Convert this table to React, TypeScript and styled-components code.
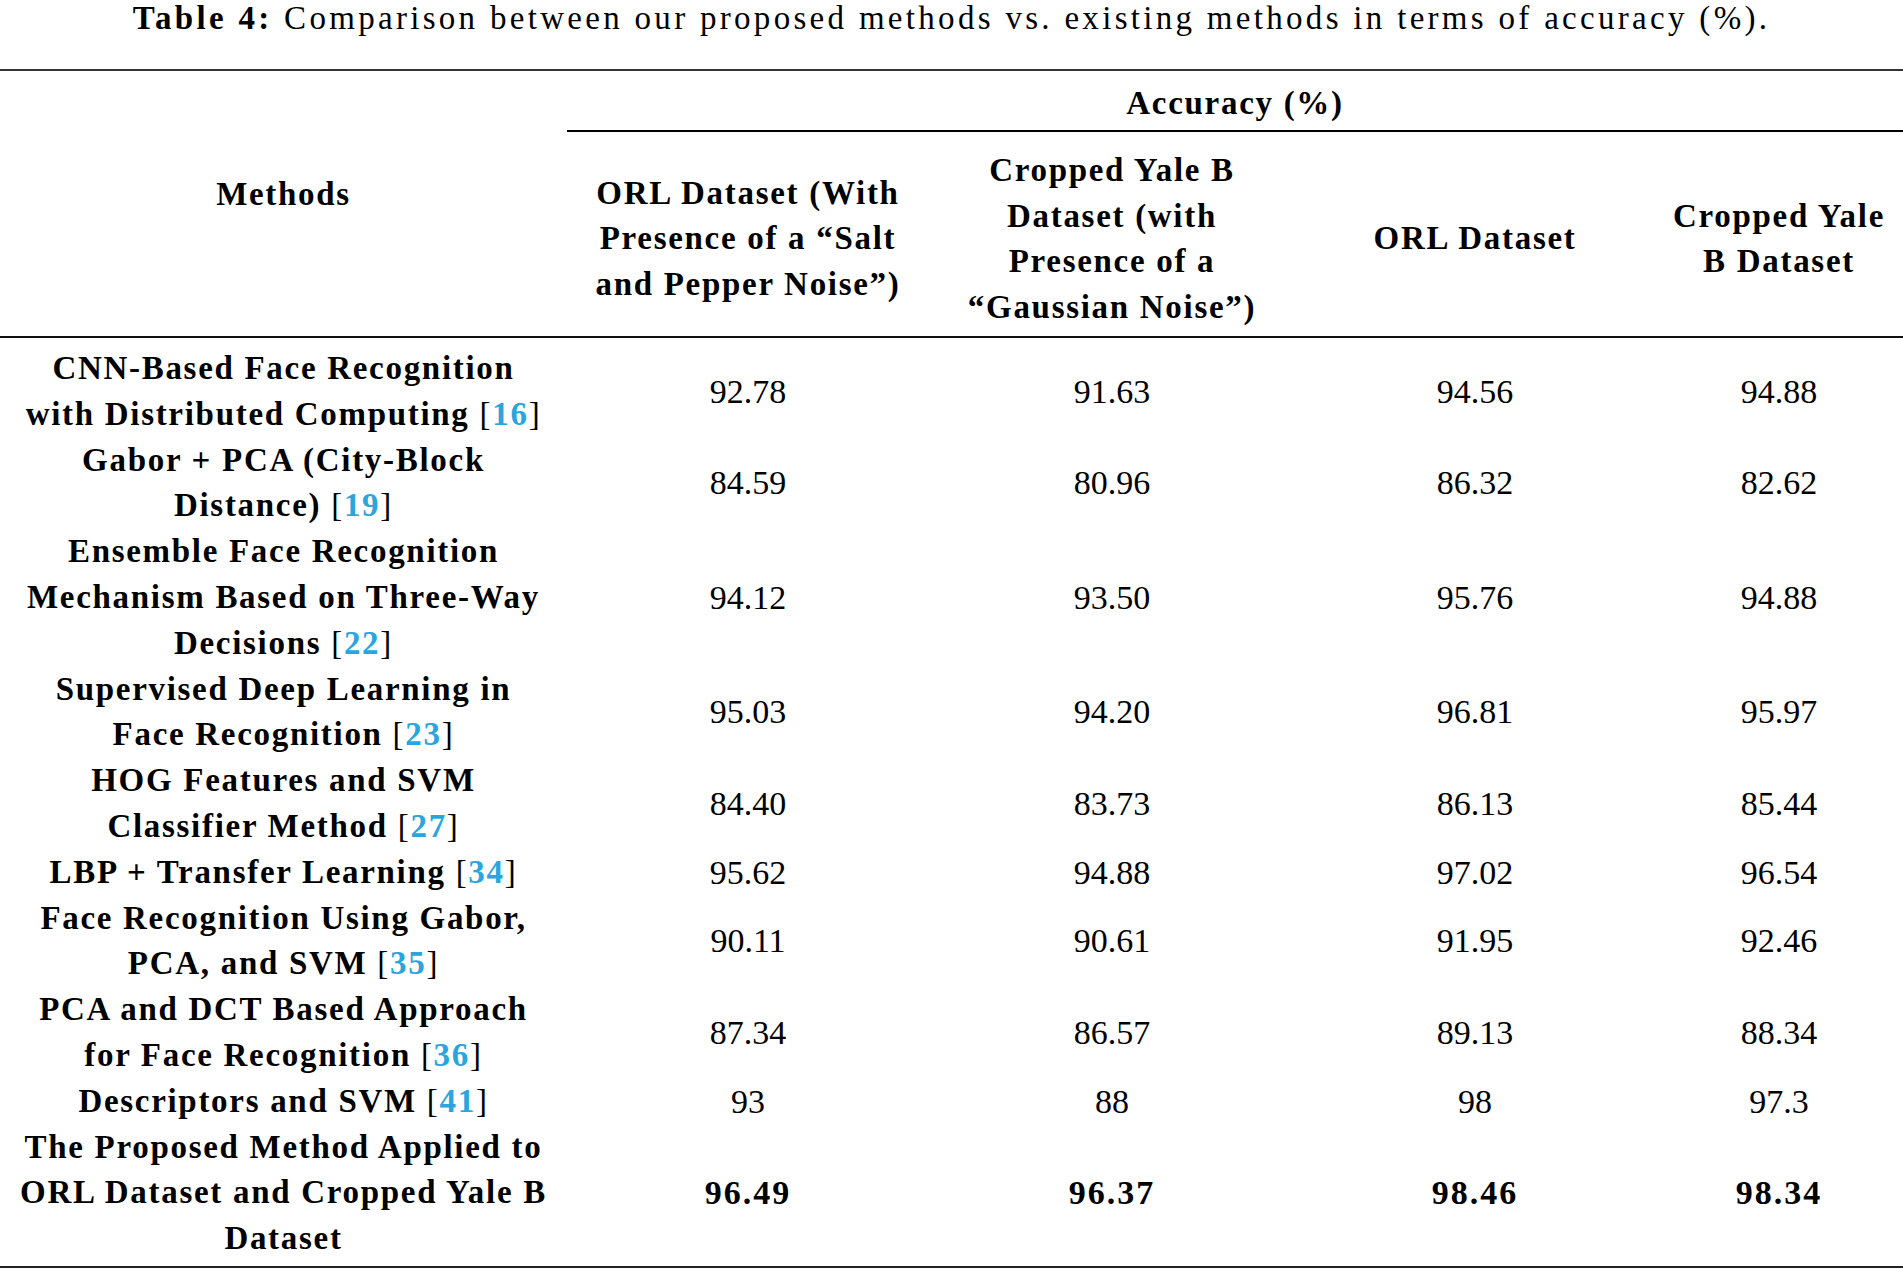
import React from "react";
import styled, { createGlobalStyle } from "styled-components";

const serif = `"Liberation Serif", "Times New Roman", serif`;

const GlobalStyle = createGlobalStyle`
  html, body {
    margin: 0;
    padding: 0;
    background: #fff;
  }
  body {
    font-family: ${serif};
    color: #000;
  }
`;

const Page = styled.div`
  width: 1903px;
`;

const Caption = styled.div`
  font-family: ${serif};
  font-size: 33px;
  line-height: 36px;
  letter-spacing: 3.3px;
  text-align: center;
  white-space: nowrap;
`;

const CaptionLabel = styled.b`
  font-weight: 700;
`;

const Table = styled.table`
  width: 1903px;
  margin-top: 33px;
  border-collapse: separate;
  border-spacing: 0;
  table-layout: fixed;
  border-top: 2px solid #333;
  font-family: ${serif};
`;

const HeadCell = styled.th`
  font-family: ${serif};
  font-size: 33px;
  font-weight: 700;
  letter-spacing: 1.7px;
  line-height: 45.8px;
  text-align: center;
  vertical-align: middle;
  white-space: nowrap;
  padding: 16px 0 5px;
  border-bottom: 2px solid #111;
`;

const MethodsHead = styled(HeadCell)`
  padding: 0 0 17px;
`;

const GroupHead = styled(HeadCell)`
  padding: 10px 0 3px;
  border-bottom: 2px solid #000;
`;

type Edge = "first" | "last" | undefined;

const edgePadding = (edge: Edge) => {
  if (edge === "first") return "8px 0 0";
  if (edge === "last") return "0 0 4px";
  return "0";
};

const MethodCell = styled.td<{ $edge: Edge }>`
  font-family: ${serif};
  font-size: 33px;
  font-weight: 700;
  letter-spacing: 1.7px;
  line-height: 45.8px;
  text-align: center;
  vertical-align: middle;
  white-space: nowrap;
  padding: ${(p) => edgePadding(p.$edge)};
  border-bottom: ${(p) => (p.$edge === "last" ? "2px solid #222" : "none")};
`;

const ValueCell = styled.td<{ $edge: Edge; $best?: boolean }>`
  font-family: ${serif};
  font-size: 34px;
  font-weight: ${(p) => (p.$best ? 700 : 400)};
  letter-spacing: ${(p) => (p.$best ? "2px" : "0")};
  line-height: 45.8px;
  text-align: center;
  vertical-align: middle;
  white-space: nowrap;
  padding: ${(p) => edgePadding(p.$edge)};
  border-bottom: ${(p) => (p.$edge === "last" ? "2px solid #222" : "none")};
`;

const Bracket = styled.span`
  font-weight: 400;
`;

const Ref = styled.span`
  color: #2aa5dd;
`;

type Row = {
  method: string[];
  ref?: number;
  values: string[];
  best?: boolean;
};

const rows: Row[] = [
  {
    method: ["CNN-Based Face Recognition", "with Distributed Computing"],
    ref: 16,
    values: ["92.78", "91.63", "94.56", "94.88"],
  },
  {
    method: ["Gabor + PCA (City-Block", "Distance)"],
    ref: 19,
    values: ["84.59", "80.96", "86.32", "82.62"],
  },
  {
    method: ["Ensemble Face Recognition", "Mechanism Based on Three-Way", "Decisions"],
    ref: 22,
    values: ["94.12", "93.50", "95.76", "94.88"],
  },
  {
    method: ["Supervised Deep Learning in", "Face Recognition"],
    ref: 23,
    values: ["95.03", "94.20", "96.81", "95.97"],
  },
  {
    method: ["HOG Features and SVM", "Classifier Method"],
    ref: 27,
    values: ["84.40", "83.73", "86.13", "85.44"],
  },
  {
    method: ["LBP + Transfer Learning"],
    ref: 34,
    values: ["95.62", "94.88", "97.02", "96.54"],
  },
  {
    method: ["Face Recognition Using Gabor,", "PCA, and SVM"],
    ref: 35,
    values: ["90.11", "90.61", "91.95", "92.46"],
  },
  {
    method: ["PCA and DCT Based Approach", "for Face Recognition"],
    ref: 36,
    values: ["87.34", "86.57", "89.13", "88.34"],
  },
  {
    method: ["Descriptors and SVM"],
    ref: 41,
    values: ["93", "88", "98", "97.3"],
  },
  {
    method: ["The Proposed Method Applied to", "ORL Dataset and Cropped Yale B", "Dataset"],
    values: ["96.49", "96.37", "98.46", "98.34"],
    best: true,
  },
];

const headers: string[][] = [
  ["ORL Dataset (With", "Presence of a \u201CSalt", "and Pepper Noise\u201D)"],
  ["Cropped Yale B", "Dataset (with", "Presence of a", "\u201CGaussian Noise\u201D)"],
  ["ORL Dataset"],
  ["Cropped Yale", "B Dataset"],
];

const Lines = ({ lines, cite }: { lines: string[]; cite?: number }) => (
  <>
    {lines.map((line, i) => (
      <React.Fragment key={i}>
        {i > 0 && <br />}
        {line}
        {i === lines.length - 1 && cite !== undefined && (
          <>
            {" "}
            <Bracket>[</Bracket>
            <Ref>{cite}</Ref>
            <Bracket>]</Bracket>
          </>
        )}
      </React.Fragment>
    ))}
  </>
);

const App = () => (
  <Page>
    <GlobalStyle />
    <Caption>
      <CaptionLabel>Table 4:</CaptionLabel> Comparison between our proposed methods vs. existing
      methods in terms of accuracy (%).
    </Caption>
    <Table>
      <colgroup>
        <col style={{ width: 567 }} />
        <col style={{ width: 362 }} />
        <col style={{ width: 366 }} />
        <col style={{ width: 360 }} />
        <col style={{ width: 248 }} />
      </colgroup>
      <thead>
        <tr>
          <MethodsHead rowSpan={2}>Methods</MethodsHead>
          <GroupHead colSpan={4}>Accuracy (%)</GroupHead>
        </tr>
        <tr>
          {headers.map((h, i) => (
            <HeadCell key={i}>
              <Lines lines={h} />
            </HeadCell>
          ))}
        </tr>
      </thead>
      <tbody>
        {rows.map((row, i) => {
          const edge: Edge = i === 0 ? "first" : i === rows.length - 1 ? "last" : undefined;
          return (
            <tr key={i}>
              <MethodCell $edge={edge}>
                <Lines lines={row.method} cite={row.ref} />
              </MethodCell>
              {row.values.map((v, j) => (
                <ValueCell key={j} $edge={edge} $best={row.best}>
                  {v}
                </ValueCell>
              ))}
            </tr>
          );
        })}
      </tbody>
    </Table>
  </Page>
);

export default App;
